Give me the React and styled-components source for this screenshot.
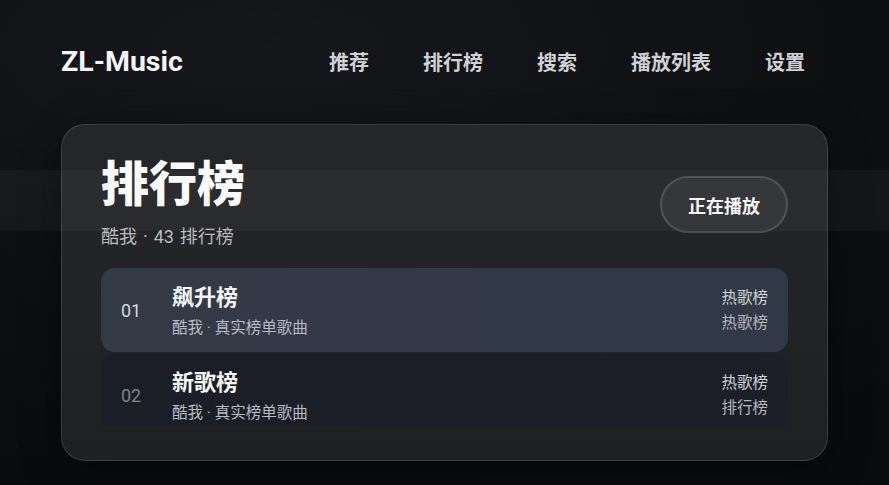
import React from "react";
import styled, { createGlobalStyle } from "styled-components";

const Global = createGlobalStyle`
  html, body { margin: 0; padding: 0; }
  body {
    width: 889px;
    height: 485px;
    overflow: hidden;
    background: radial-gradient(120% 90% at 30% 10%, #15171a 0%, #0d0f11 55%, #0a0b0d 100%);
    font-family: Roboto, "Noto Sans CJK SC", sans-serif;
    color: #fff;
  }
`;

const Page = styled.div`
  position: relative;
  width: 889px;
  height: 485px;
  box-sizing: border-box;
  padding: 0 61px;
  display: flex;
  flex-direction: column;
`;

const Band = styled.div`
  position: absolute;
  left: 0;
  right: 0;
  top: 170px;
  height: 61px;
  background: rgba(255, 255, 255, 0.035);
  pointer-events: none;
  z-index: 2;
`;

const Header = styled.header`
  height: 124px;
  display: flex;
  align-items: center;
  justify-content: space-between;
  padding-right: 23px;
  box-sizing: border-box;
  padding-bottom: 2px;
`;

const Logo = styled.div`
  font-family: Roboto, "Noto Sans", sans-serif;
  font-weight: 700;
  font-size: 28.5px;
  color: #f4f5f6;
`;

const Nav = styled.nav`
  display: flex;
  gap: 54px;
`;

const NavItem = styled.a`
  font-family: "Noto Sans CJK SC", sans-serif;
  font-size: 20px;
  font-weight: 700;
  color: #cfd1d4;
  text-decoration: none;
`;

const Card = styled.section`
  height: 337px;
  box-sizing: border-box;
  border-radius: 24px;
  border: 1px solid rgba(255, 255, 255, 0.12);
  background: linear-gradient(180deg, #242628 0%, #212325 60%, #1f2021 100%);
  padding: 23px 39px 34px 39px;
  display: flex;
  flex-direction: column;
  box-shadow: 0 10px 40px rgba(0, 0, 0, 0.4);
`;

const CardHead = styled.div`
  display: flex;
  justify-content: space-between;
  align-items: center;
  margin-bottom: 19px;
`;

const TitleBlock = styled.div`
  display: flex;
  flex-direction: column;
`;

const Title = styled.h1`
  margin: 0;
  font-family: "Noto Sans CJK SC", sans-serif;
  font-size: 48px;
  line-height: 64px;
  font-weight: 900;
  color: #fafafa;
`;

const Subtitle = styled.div`
  font-size: 18px;
  line-height: 24px;
  color: #b9bbbe;
  margin-top: 13px;
  word-spacing: 1.5px;
`;

const PlayButton = styled.button`
  height: 57px;
  padding: 0 26px;
  border-radius: 29px;
  border: 2px solid rgba(255, 255, 255, 0.14);
  background: rgba(255, 255, 255, 0.05);
  color: #f6f6f6;
  font-family: "Noto Sans CJK SC", sans-serif;
  font-size: 18px;
  font-weight: 700;
  margin-top: 12px;
`;

const List = styled.div`
  flex: 1;
  overflow: hidden;
  display: flex;
  flex-direction: column;
  gap: 1px;
`;

const Row = styled.div`
  flex-shrink: 0;
  height: 84px;
  box-sizing: border-box;
  border-radius: 14px;
  padding: 0 20px;
  display: flex;
  align-items: center;
  background: ${(p) =>
    p.$active
      ? "linear-gradient(90deg, #343a46 0%, #313846 100%)"
      : "linear-gradient(90deg, #1b1e26 0%, #1c1f27 100%)"};
`;

const Num = styled.div`
  width: 51px;
  font-size: 18px;
  color: ${(p) => (p.$active ? "#d6d9de" : "#7e838c")};
`;

const Info = styled.div`
  flex: 1;
  display: flex;
  flex-direction: column;
`;

const RowTitle = styled.div`
  font-family: "Noto Sans CJK SC", sans-serif;
  font-size: 22px;
  line-height: 28px;
  font-weight: 700;
  color: #f6f7f8;
`;

const RowSub = styled.div`
  font-size: 15.5px;
  line-height: 22px;
  color: #b8bcc3;
  margin-top: 8px;
`;

const Tags = styled.div`
  display: flex;
  flex-direction: column;
  align-items: flex-end;
  gap: 3px;
`;

const Tag = styled.div`
  font-size: 15.5px;
  line-height: 22px;
  color: ${(p) => (p.$dim ? "#b3b7be" : "#d0d3d8")};
`;

const navItems = ["推荐", "排行榜", "搜索", "播放列表", "设置"];

const rows = [
  { n: "01", title: "飙升榜", sub: "酷我 · 真实榜单歌曲", tags: ["热歌榜", "热歌榜"], active: true },
  { n: "02", title: "新歌榜", sub: "酷我 · 真实榜单歌曲", tags: ["热歌榜", "排行榜"] },
];

export default function App() {
  return (
    <>
      <Global />
      <Page>
        <Band />
        <Header>
          <Logo>ZL-Music</Logo>
          <Nav>
            {navItems.map((t) => (
              <NavItem key={t}>{t}</NavItem>
            ))}
          </Nav>
        </Header>
        <Card>
          <CardHead>
            <TitleBlock>
              <Title>排行榜</Title>
              <Subtitle>酷我 · 43 排行榜</Subtitle>
            </TitleBlock>
            <PlayButton>正在播放</PlayButton>
          </CardHead>
          <List>
            {rows.map((r) => (
              <Row key={r.n} $active={r.active}>
                <Num $active={r.active}>{r.n}</Num>
                <Info>
                  <RowTitle>{r.title}</RowTitle>
                  <RowSub>{r.sub}</RowSub>
                </Info>
                <Tags>
                  <Tag>{r.tags[0]}</Tag>
                  <Tag $dim>{r.tags[1]}</Tag>
                </Tags>
              </Row>
            ))}
          </List>
        </Card>
      </Page>
    </>
  );
}
